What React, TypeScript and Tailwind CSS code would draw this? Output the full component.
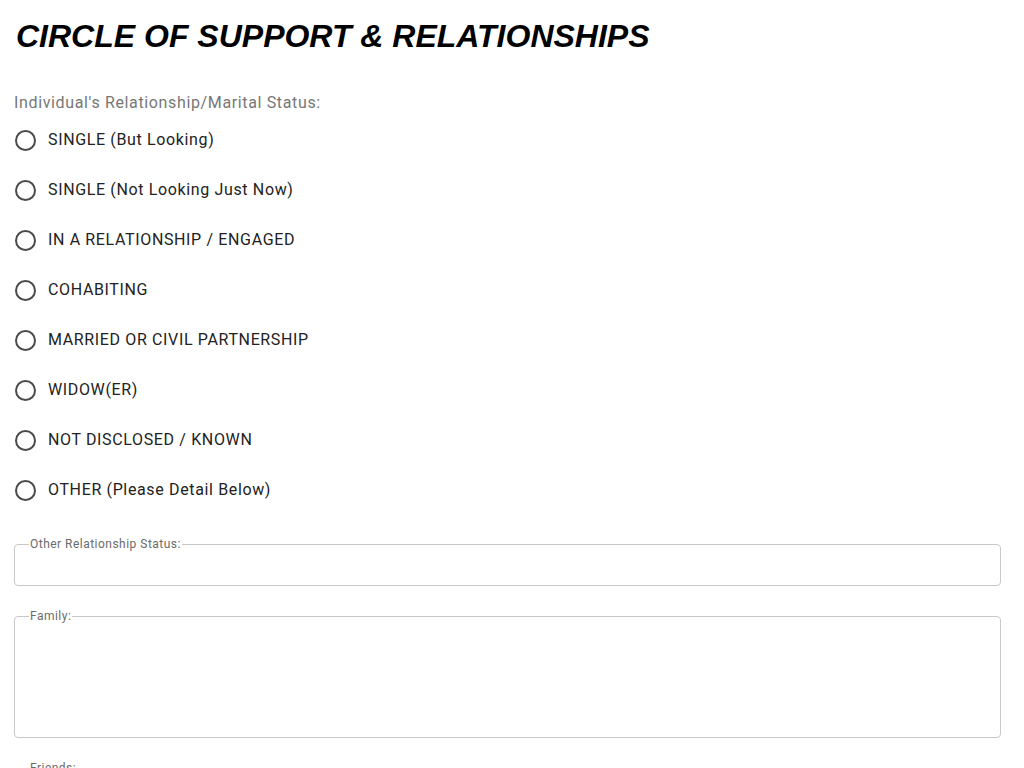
import React from "react";

const options = [
  "SINGLE (But Looking)",
  "SINGLE (Not Looking Just Now)",
  "IN A RELATIONSHIP / ENGAGED",
  "COHABITING",
  "MARRIED OR CIVIL PARTNERSHIP",
  "WIDOW(ER)",
  "NOT DISCLOSED / KNOWN",
  "OTHER (Please Detail Below)",
];

function Field({ label, h }: { label: string; h: string }) {
  return (
    <fieldset className="m-0 border border-[#c8c8c8] rounded-[4px] px-[14px] py-0 min-w-0">
      <legend className="px-[1px] text-[12px] leading-[14px] tracking-[0.04em] text-[#6b6b6b]">{label}</legend>
      <div className={h} />
    </fieldset>
  );
}

export default function App() {
  return (
    <div
      className="w-[1024px] h-[768px] overflow-hidden bg-white pl-[14px] pr-[23px]"
      style={{ fontFamily: "Roboto, 'Liberation Sans', sans-serif" }}
    >
      <h1
        className="pt-[20px] pl-[2px] text-[32px] leading-none font-bold italic text-black"
        style={{ fontFamily: "'Liberation Sans', Arial, sans-serif" }}
      >
        CIRCLE OF SUPPORT &amp; RELATIONSHIPS
      </h1>
      <div className="mt-[39px] text-[16px] leading-[24px] tracking-[0.04em] text-[#777777]">
        Individual's Relationship/Marital Status:
      </div>
      <div className="flex flex-col">
        {options.map((o) => (
          <label key={o} className="flex h-[50px] items-center">
            <span className="ml-[1px] h-[21px] w-[21px] rounded-full border-2 border-[#4a4a4a]" />
            <span className="ml-[12px] text-[16px] tracking-[0.04em] text-[#222222]">{o}</span>
          </label>
        ))}
      </div>
      <div className="mt-[22px] flex flex-col gap-[23px]">
        <Field label="Other Relationship Status:" h="h-[34px]" />
        <Field label="Family:" h="h-[114px]" />
        <Field label="Friends:" h="h-[114px]" />
      </div>
    </div>
  );
}
